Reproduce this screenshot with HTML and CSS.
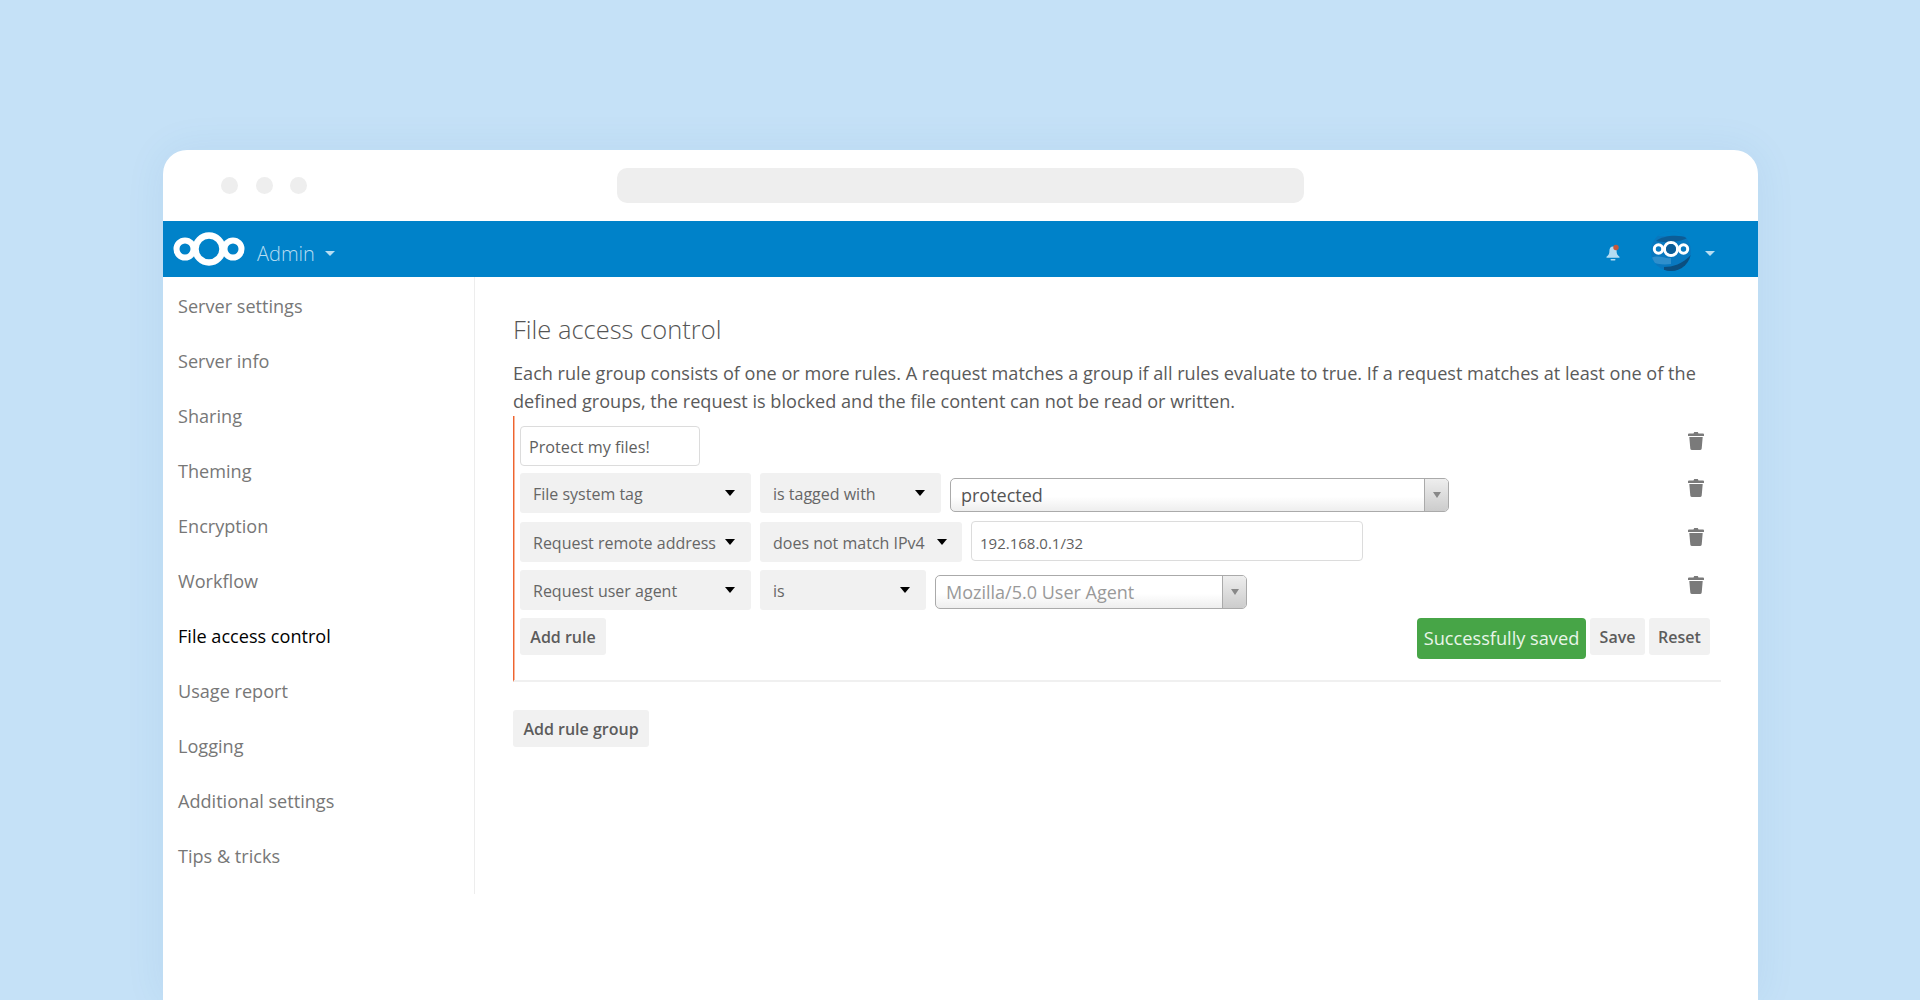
FILE: index.html
```html
<!DOCTYPE html>
<html lang="en">
<head>
<meta charset="utf-8">
<title>File access control</title>
<link rel="stylesheet" href="styles.css">
</head>
<body>
<div class="window">
  <div class="chrome">
    <div class="dots"><span class="dot"></span><span class="dot"></span><span class="dot"></span></div>
    <div class="address"></div>
  </div>
  <header class="topbar">
    <svg class="logo" viewBox="0 0 72 34" width="72" height="34">
      <g fill="none" stroke="#fff">
        <circle cx="12" cy="17" r="8.5" stroke-width="6"/>
        <circle cx="36" cy="17" r="13.5" stroke-width="6.500"/>
        <circle cx="60" cy="17" r="8.5" stroke-width="6"/>
      </g>
    </svg>
    <span class="app-name">Admin</span>
    <span class="caret-light"></span>
    <div class="topbar-right">
      <svg class="bell" viewBox="0 0 16 18" width="16" height="18">
        <path d="M8 2.5c-2.6 0-3.6 2-3.6 4.400 0 3-1 4.400-2.900 5.800v1h13v-1c-1.900-1.400-2.900-2.800-2.900-5.800C11.600 4.500 10.600 2.500 8 2.500z" fill="#b5dcf2"/>
        <rect x="5.500" y="15" width="5" height="1.600" rx=".8" fill="#b5dcf2"/>
        <circle cx="11" cy="3.500" r="2.700" fill="#c4573c"/>
      </svg>
      <svg class="avatar" viewBox="0 0 40 40" width="40" height="40">
        <defs><clipPath id="avatar-clip"><circle cx="20" cy="20" r="20"/></clipPath></defs>
        <g clip-path="url(#avatar-clip)">
          <rect width="40" height="40" fill="#0878bf"/>
          <path d="M0 0h40v5H0z" fill="#0082c9"/>
          <path d="M5 10C11 5 27 3 36 7c-6 4-22 5-31 3z" fill="#0c5d97"/>
          <path d="M0 27c8-4 14 1 20 0v6c-8 1-14 0-20-2z" fill="#2f8fcc"/>
          <path d="M13 36c9 0 18-3 27-12v16H13z" fill="#0b4f80"/>
        </g>
        <g fill="none" stroke="#fff">
          <circle cx="7.500" cy="18" r="4.200" stroke-width="3"/>
          <circle cx="20" cy="18" r="6.500" stroke-width="3"/>
          <circle cx="32.500" cy="18" r="4.200" stroke-width="3"/>
        </g>
        <circle cx="20" cy="18" r="5" fill="#0c5d97"/>
      </svg>
      <span class="caret-light"></span>
    </div>
  </header>
  <div class="content">
    <nav class="sidebar">
      <a class="nav-item">Server settings</a>
      <a class="nav-item">Server info</a>
      <a class="nav-item">Sharing</a>
      <a class="nav-item">Theming</a>
      <a class="nav-item">Encryption</a>
      <a class="nav-item">Workflow</a>
      <a class="nav-item active">File access control</a>
      <a class="nav-item">Usage report</a>
      <a class="nav-item">Logging</a>
      <a class="nav-item">Additional settings</a>
      <a class="nav-item">Tips &amp; tricks</a>
    </nav>
    <main class="main">
      <h2 class="title">File access control</h2>
      <p class="intro">Each rule group consists of one or more rules. A request matches a group if all rules evaluate to true. If a request matches at least one of the defined groups, the request is blocked and the file content can not be read or written.</p>
      <section class="group">
        <div class="row row-title">
          <div class="field name-field">Protect my files!</div>
          <svg class="trash" viewBox="0 0 16 18" width="16" height="18"><use href="#trash-icon"/></svg>
        </div>
        <div class="row">
          <div class="select check"><span>File system tag</span><i class="caret"></i></div>
          <div class="select op-tagged"><span>is tagged with</span><i class="caret"></i></div>
          <div class="combo combo-tag"><span>protected</span><b class="combo-arrow"></b></div>
          <svg class="trash" viewBox="0 0 16 18" width="16" height="18"><use href="#trash-icon"/></svg>
        </div>
        <div class="row row-gap">
          <div class="select check"><span>Request remote address</span><i class="caret"></i></div>
          <div class="select op-ipv4"><span>does not match IPv4</span><i class="caret"></i></div>
          <div class="field ip-field">192.168.0.1/32</div>
          <svg class="trash" viewBox="0 0 16 18" width="16" height="18"><use href="#trash-icon"/></svg>
        </div>
        <div class="row">
          <div class="select check"><span>Request user agent</span><i class="caret"></i></div>
          <div class="select op-is"><span>is</span><i class="caret"></i></div>
          <div class="combo combo-agent placeholder"><span>Mozilla/5.0 User Agent</span><b class="combo-arrow"></b></div>
          <svg class="trash" viewBox="0 0 16 18" width="16" height="18"><use href="#trash-icon"/></svg>
        </div>
        <div class="group-footer">
          <button class="btn btn-add">Add rule</button>
          <div class="actions">
            <div class="saved">Successfully saved</div>
            <button class="btn btn-save">Save</button>
            <button class="btn btn-reset">Reset</button>
          </div>
        </div>
      </section>
      <button class="btn add-group">Add rule group</button>
    </main>
  </div>
</div>
<svg class="defs" width="0" height="0">
  <symbol id="trash-icon" viewBox="0 0 16 18">
    <path d="M5.500 1.500 6.200 0h3.600l.7 1.500H15a1 1 0 0 1 1 1V4H0V2.500a1 1 0 0 1 1-1z" fill="#7a7a7a"/>
    <path d="M1.300 5h13.400l-1 11.600a1.400 1.400 0 0 1-1.400 1.400H3.700a1.400 1.400 0 0 1-1.400-1.400z" fill="#7a7a7a"/>
  </symbol>
</svg>
</body>
</html>
```
FILE: styles.css
```css
* { box-sizing: border-box; }
html, body { margin: 0; height: 1000px; overflow: hidden; }
body {
  background: #c5e1f7;
  font-family: "Open Sans", "Noto Sans", sans-serif;
  color: #555;
  padding: 150px 162px 0 163px;
}
.window {
  width: 1595px;
  height: 850px;
  background: #fff;
  border-radius: 24px 24px 0 0;
  box-shadow: 0 0 40px rgba(40, 110, 170, .08);
  overflow: hidden;
}
.chrome {
  height: 71px;
  display: flex;
  align-items: center;
  padding-left: 58px;
}
.dots { display: flex; gap: 17.700px; width: 396px; margin-top: -1px; }
.dot { width: 17px; height: 17px; border-radius: 50%; background: #eee; }
.address { width: 687px; height: 35px; margin-top: -1px; border-radius: 10px; background: #eee; }
.topbar {
  height: 56px;
  background: #0082c9;
  display: flex;
  align-items: center;
  padding: 0 0 0 10px;
  color: #fff;
}
.logo { margin-top: -1px; }
.app-name { font-size: 20px; font-weight: 300; color: #b7ddf2; margin: 8px 10px 0 12px; }
.caret-light {
  width: 0; height: 0;
  border-left: 5px solid transparent;
  border-right: 5px solid transparent;
  border-top: 5px solid #b7ddf2;
  margin-top: 9px;
}
.topbar-right { margin-left: auto; display: flex; align-items: center; padding-right: 43px; }
.bell { margin-right: 30px; margin-top: 7px; }
.avatar { margin-right: 14px; margin-top: 4px; }
.content { display: flex; align-items: flex-start; }
.sidebar {
  width: 312px;
  height: 617px;
  border-right: 1px solid #ededed;
  padding-top: 2px;
  display: flex;
  flex-direction: column;
}
.nav-item {
  height: 55px;
  line-height: 55px;
  padding-left: 15px;
  font-size: 18.100px;
  color: #777;
}
.nav-item.active { color: #000; }
.main { flex: 1; padding: 0 37px 0 38px; }
.title { margin: 35px 0 0; font-size: 25.500px; line-height: 34px; font-weight: 300; color: #555; }
.intro { margin: 13px 0 0; font-size: 18.130px; line-height: 28px; color: #5a5a5a; width: 1200px; }
.group {
  margin-top: 1px;
  border-left: 1px solid #ee6430;
  border-bottom: 2px solid #f0f0f0;
  background: linear-gradient(#f8b79c, #f8b79c) 0 0 / 1px 100% no-repeat;
  padding: 10px 11px 21px 6px;
  display: flex;
  flex-direction: column;
  gap: 8px;
}
.row { display: flex; align-items: center; gap: 9px; height: 40px; }
.row-title { margin-bottom: -1px; }
.row-gap { margin-top: 1px; }
.row .trash { margin-left: auto; margin-right: 6px; align-self: flex-start; margin-top: 6px; flex: none; }
.field {
  height: 40px;
  border: 1px solid #dcdcdc;
  border-radius: 4px;
  padding: 1px 8px 0;
  font-size: 16.200px;
  line-height: 38px;
  color: #5f5f5f;
  background: #fff;
}
.name-field { width: 180px; }
.ip-field { width: 392px; margin-top: -2px; padding-top: 2px; font-size: 15px; }
.select {
  height: 40px;
  border-radius: 3px;
  background: #f1f1f1;
  padding: 1px 16px 0 13px;
  display: flex;
  align-items: center;
  justify-content: space-between;
  font-size: 16px;
  color: #666;
}
.check { width: 231px; }
.op-tagged { width: 181px; }
.op-ipv4 { width: 202px; padding-right: 15px; }
.op-is { width: 166px; }
.caret {
  width: 0; height: 0;
  border-left: 5.500px solid transparent;
  border-right: 5.500px solid transparent;
  border-top: 6px solid #000;
  margin-top: -2px;
  flex: none;
}
.combo {
  height: 34px;
  margin-top: 3px;
  border: 1.500px solid #aaa;
  border-radius: 5px;
  background: linear-gradient(#fff 55%, #eee);
  display: flex;
  align-items: center;
  justify-content: space-between;
  padding-left: 10px;
  font-size: 18px;
  color: #555;
}
.combo span { margin-top: 1px; }
.combo-tag { width: 499px; }
.combo-agent { width: 312px; color: #999; }
.combo-arrow {
  width: 24px;
  height: 100%;
  border-left: 1px solid #aaa;
  border-radius: 0 4px 4px 0;
  background: linear-gradient(#eee, #ccc);
  display: flex;
  align-items: center;
  justify-content: center;
}
.combo-arrow::after {
  content: "";
  width: 0; height: 0;
  border-left: 4px solid transparent;
  border-right: 4px solid transparent;
  border-top: 6px solid #888;
}
.group-footer { display: flex; justify-content: space-between; align-items: flex-start; height: 41px; }
.actions { display: flex; align-items: flex-start; gap: 4px; }
.btn {
  height: 37px;
  padding: 0 10px;
  border: 0;
  border-radius: 3px;
  background: #f1f1f1;
  font-family: inherit;
  font-size: 16px;
  font-weight: 600;
  color: #5c5c5c;
}
.btn-add { width: 86px; padding: 0; }
.btn-save { width: 55px; padding: 0; }
.btn-reset { width: 61px; padding: 0; }
.saved {
  height: 41px;
  width: 169px;
  border-radius: 4px;
  background: #47a547;
  color: #e9f5e9;
  font-size: 18.200px;
  line-height: 41px;
  text-align: center;
  white-space: nowrap;
}
.add-group { display: block; margin-top: 28px; width: 136px; padding: 0; }
.defs { position: absolute; }
```
